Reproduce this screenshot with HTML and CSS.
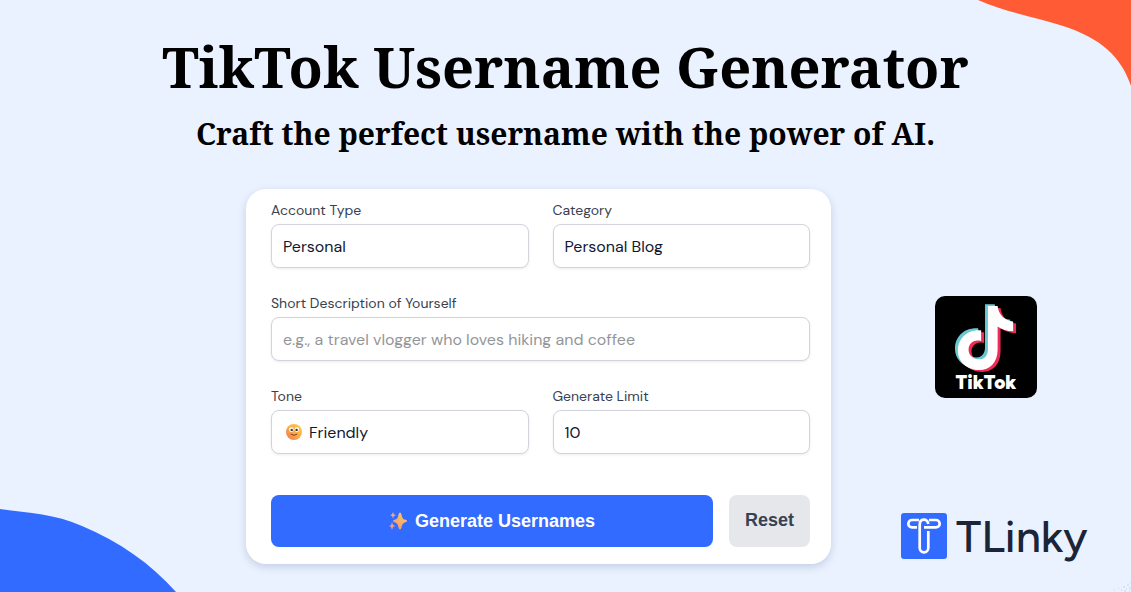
FILE: index.html
```html
<!DOCTYPE html>
<html lang="en">
<head>
    <meta charset="UTF-8">
    <meta name="viewport" content="width=device-width, initial-scale=1.0">
    <title>TikTok Username Generator</title>
    <link rel="stylesheet" href="styles.css">
</head>
<body>
    <svg class="blob blob-top" viewBox="0 0 153 86" aria-hidden="true">
        <path d="M0 0C27 12 57 17 85 26C122 38 143 56 153 86V0Z" fill="#ff5c35"/>
    </svg>
    <svg class="blob blob-bottom" viewBox="0 0 176 83" aria-hidden="true">
        <path d="M0 0C30 4 55 5 82 17C120 33 150 54 176 83H0Z" fill="#326bff"/>
    </svg>
    <svg class="blob specks" viewBox="0 0 18 9" aria-hidden="true">
        <path d="M1 7h1M5 5h1M8 7h1M10 4h2M13 6h1M14 2h2M16 5h2M11 8h2M16 8h1M17 0h1" stroke="#c3d6e6"/>
    </svg>

    <header class="header">
        <h1>TikTok Username Generator</h1>
        <h2>Craft the perfect username with the power of AI.</h2>
    </header>

    <main class="layout">
        <form class="card">
            <div class="fields">
                <div class="form-group">
                    <label for="account">Account Type</label>
                    <select id="account">
                        <option>Personal</option>
                    </select>
                </div>
                <div class="form-group">
                    <label for="category">Category</label>
                    <select id="category">
                        <option>Personal Blog</option>
                    </select>
                </div>
                <div class="form-group wide">
                    <label for="description">Short Description of Yourself</label>
                    <input type="text" id="description" placeholder="e.g., a travel vlogger who loves hiking and coffee">
                </div>
                <div class="form-group tone">
                    <label for="tone">Tone</label>
                    <select id="tone">
                        <option>Friendly</option>
                    </select>
                    <svg class="smile" viewBox="0 0 16 16" aria-hidden="true">
                        <defs>
                            <linearGradient id="face" x1="1" y1="0" x2="0" y2="1">
                                <stop offset="0" stop-color="#ffd044"/>
                                <stop offset=".5" stop-color="#fbab45"/>
                                <stop offset="1" stop-color="#ef7359"/>
                            </linearGradient>
                        </defs>
                        <circle cx="8" cy="8" r="8" fill="url(#face)"/>
                        <circle cx="5.3" cy="5.6" r="2.3" fill="#fff"/>
                        <circle cx="10.9" cy="5.6" r="2.3" fill="#fff"/>
                        <circle cx="5.7" cy="5.9" r="1.2" fill="#43302b"/>
                        <circle cx="10.6" cy="5.9" r="1.2" fill="#43302b"/>
                        <path d="M5 10.3Q8 12.6 11 10.3" fill="none" stroke="#70412d" stroke-linecap="round"/>
                    </svg>
                </div>
                <div class="form-group">
                    <label for="limit">Generate Limit</label>
                    <input type="text" inputmode="numeric" id="limit" value="10">
                </div>
            </div>
            <div class="actions">
                <button type="button" class="generate">
                    <svg class="sparkles" viewBox="0 0 18 18" aria-hidden="true">
                        <defs>
                            <linearGradient id="spark" x1="1" y1="0" x2="0" y2="1">
                                <stop offset="0" stop-color="#ffd15c"/>
                                <stop offset="1" stop-color="#f58d72"/>
                            </linearGradient>
                        </defs>
                        <path d="M11 .5Q12 .5 12.4 2.2C13.2 6 13.8 6.9 16.5 7.8Q18 8.3 18 9T16.5 10.2C13.8 11.1 13.2 12 12.4 15.8Q12 17.5 11 17.5T9.6 15.8C8.8 12 8.2 11.1 5.5 10.2Q4 9.7 4 9T5.5 7.8C8.2 6.9 8.8 6 9.6 2.2Q10 .5 11 .5Z" fill="url(#spark)"/>
                        <path d="M4 0L4.9 2.3 7 3.2 4.9 4.1 4 6.4 3.1 4.1 1 3.2 3.1 2.3Z" fill="#f5a886"/>
                        <path d="M3 10L4 13 6.4 14 4 15 3 18 2 15 0 14 2 13Z" fill="#f39a91"/>
                    </svg>
                    Generate Usernames
                </button>
                <button type="reset" class="reset">Reset</button>
            </div>
        </form>

        <aside class="brands">
            <div class="tiktok">
                <svg viewBox="0 0 64 72" aria-hidden="true">
                    <defs>
                        <path id="note" d="M31 0H41C42 9 48 15 57 16V26C51 26 45 24 41 21V45C41 58 33 66 22 66C9 66 0 57 0 46C0 33 10 24 24 25V36C16 34 11 39 11 45C11 51 16 55 22 55C28 55 31 51 31 44Z"/>
                    </defs>
                    <use href="#note" x="6" y="4" fill="#ee2b57"/>
                    <use href="#note" x="0" y="0" fill="#69c9d0"/>
                    <use href="#note" x="3" y="2" fill="#fff"/>
                </svg>
                <span>TikTok</span>
            </div>
            <div class="tlinky">
                <svg viewBox="0 0 46 46" aria-hidden="true">
                    <rect width="46" height="46" rx="3" fill="#326bff"/>
                    <g fill="none" stroke="#fff" stroke-width="2.7">
                        <path d="M18 7H11a3.700 3.700 0 0 0 0 7.400H16"/>
                        <path d="M28 7H35a3.700 3.700 0 0 1 0 7.400H23"/>
                        <path d="M27.300 11C26.500 5 18.700 5 18.700 12V35a4.300 4.300 0 0 0 8.600 0V18"/>
                    </g>
                </svg>
                <span>TLinky</span>
            </div>
        </aside>
    </main>
</body>
</html>
```
FILE: styles.css
```css
* { box-sizing: border-box; }
body {
    position: relative;
    min-height: 100vh;
    margin: 0;
    overflow-x: hidden;
    background: #ebf2ff;
    font-family: "DM Sans", Figtree, Inter, "Liberation Sans", sans-serif;
    font-optical-sizing: none;
}

.blob { position: absolute; z-index: -1; }
.blob-top { top: 0; right: 0; width: 153px; }
.blob-bottom { bottom: 0; left: 0; width: 176px; }
.specks { right: 0; bottom: 0; width: 18px; }

.header {
    padding-top: 26px;
    text-align: center;
    color: #000;
    font-family: "Noto Serif", "DejaVu Serif Condensed", "Liberation Serif", serif;
}
h1 { margin: 0; font-size: 56px; line-height: 80px; }
h2 { margin: 6px 0 0; font-size: 30px; line-height: 44px; }

.layout {
    display: grid;
    grid-template-columns: 1fr minmax(0, 585px) 300px;
    margin-top: 33px;
}
.card {
    grid-column: 2;
    padding: 10px 21px 17px 25px;
    background: #fff;
    border-radius: 20px;
    box-shadow: 0 3px 8px rgba(40, 70, 120, 0.2);
}
.fields {
    display: grid;
    grid-template-columns: 1fr 1fr;
    gap: 24px;
}
.form-group { position: relative; min-width: 0; }
.wide { grid-column: 1 / -1; }
label {
    display: block;
    margin-bottom: 3px;
    color: #374151;
    font-size: 14px;
    line-height: 22px;
}
input, select {
    display: block;
    width: 100%;
    height: 44px;
    padding: 0 11px;
    appearance: none;
    background: #fff;
    border: 1px solid #d1d5db;
    border-radius: 8px;
    box-shadow: 0 1px 3px rgba(0, 0, 0, 0.08);
    color: #111832;
    font-family: inherit;
    font-size: 16px;
}
input::placeholder { color: #939699; }
.tone select { padding-left: 37px; }
.smile { position: absolute; left: 15px; bottom: 14px; width: 16px; }

.actions { display: flex; gap: 16px; margin-top: 41px; }
button {
    height: 52px;
    border: none;
    border-radius: 8px;
    font-family: "Liberation Sans", Arial, sans-serif;
    font-size: 18px;
    font-weight: bold;
    cursor: pointer;
}
.generate {
    display: flex;
    flex: 1;
    align-items: center;
    justify-content: center;
    gap: 8px;
    background: #326bff;
    color: #fff;
}
.sparkles { width: 18px; }
.reset { padding: 0 16px 2px; background: #e5e7eb; color: #374151; }

.brands {
    display: flex;
    flex-direction: column;
    justify-content: space-between;
    align-items: flex-start;
    padding: 107px 0 5px 70px;
}
.tiktok {
    display: flex;
    flex-direction: column;
    align-items: center;
    width: 102px;
    height: 102px;
    margin-left: 34px;
    padding-top: 8px;
    background: #000;
    border-radius: 10px;
    color: #fff;
    font-family: Figtree, Lato, sans-serif;
    font-size: 19px;
    font-weight: 900;
    line-height: 18px;
}
.tiktok svg { width: 62px; height: 70px; }
.tlinky {
    display: flex;
    align-items: center;
    gap: 9px;
    color: #1c2438;
    font-family: Figtree, Lato, sans-serif;
    font-size: 45px;
    font-weight: 500;
    line-height: 46px;
}
.tlinky svg { width: 46px; }
```
